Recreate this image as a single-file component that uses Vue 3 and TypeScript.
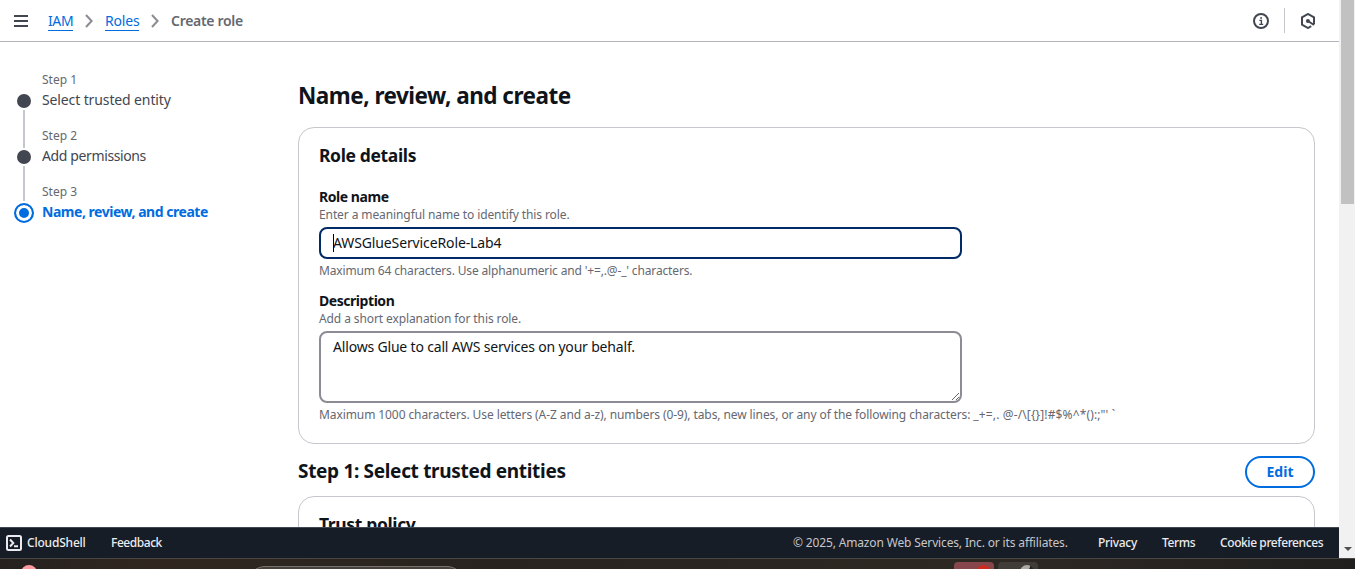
<script setup lang="ts">
import { ref } from 'vue'

interface Step {
  label: string
  title: string
  kind: string
}

const steps: Step[] = [
  { label: 'Step 1', title: 'Select trusted entity', kind: 'first' },
  { label: 'Step 2', title: 'Add permissions', kind: 'second' },
  { label: 'Step 3', title: 'Name, review, and create', kind: 'active' },
]

const roleName = ref('AWSGlueServiceRole-Lab4')
const description = ref('Allows Glue to call AWS services on your behalf.')
const allowed = '_+=,. @-/\\[{}]!#$%^*():;"\' `'
</script>

<template>
  <div class="screen">
    <div class="viewport">
      <div class="page">
        <header class="topbar">
          <svg class="burger" width="14" height="12" viewBox="0 0 14 12">
            <path d="M0 1h14M0 6h14M0 11h14" />
          </svg>
          <nav class="crumbs">
            <a class="crumb iam">IAM</a>
            <svg class="chevron" width="8" height="14" viewBox="0 0 8 14"><path d="M1 1l5.6 6L1 13" /></svg>
            <a class="crumb roles">Roles</a>
            <svg class="chevron" width="8" height="14" viewBox="0 0 8 14"><path d="M1 1l5.6 6L1 13" /></svg>
            <span class="current">Create role</span>
          </nav>
          <div class="tools">
            <svg width="16" height="16" viewBox="0 0 16 16">
              <circle class="line" cx="8" cy="8" r="7" />
              <path class="line thin" d="M6.4 7.4h2V11.6M6.2 11.4h4" />
              <path class="line thin" d="M7.2 5h1.8" />
            </svg>
            <i class="divider"></i>
            <svg width="16" height="16" viewBox="0 0 16 16">
              <path class="line" d="M11.2 13.2L8 15 2 11.6V4.4L8 1l6 3.4v6.8" />
              <circle class="fill" cx="7.9" cy="7.9" r="2" />
              <path class="line" d="M8 8l6 4" />
            </svg>
          </div>
        </header>

        <div class="body">
          <aside class="steps">
            <div v-for="s in steps" :key="s.label" class="step" :class="s.kind">
              <div class="rail">
                <i class="dot"></i>
                <i class="link"></i>
              </div>
              <div class="step-text">
                <div class="step-label">{{ s.label }}</div>
                <div class="step-title">{{ s.title }}</div>
              </div>
            </div>
          </aside>

          <main class="main">
            <h1>Name, review, and create</h1>
            <section class="card details">
              <h3>Role details</h3>
              <label class="field-label">Role name</label>
              <p class="hint enter">Enter a meaningful name to identify this role.</p>
              <div class="input-wrap">
                <input v-model="roleName" class="input" type="text" spellcheck="false" />
                <i class="caret"></i>
              </div>
              <p class="note max64">Maximum 64 characters. Use alphanumeric and '+=,.@-_' characters.</p>
              <label class="field-label">Description</label>
              <p class="hint">Add a short explanation for this role.</p>
              <textarea v-model="description" class="area" spellcheck="false"></textarea>
              <p class="note">Maximum 1000 characters. Use letters (A-Z and a-z), numbers (0-9), tabs, new lines, or any of the following characters: <span class="allowed">{{ allowed }}</span></p>
            </section>
            <div class="section-head">
              <h2>Step 1: Select trusted entities</h2>
              <button class="edit" type="button">Edit</button>
            </div>
            <section class="card trust">
              <h3>Trust policy</h3>
            </section>
          </main>
        </div>

        <footer class="footer">
          <svg class="shell" width="16" height="16" viewBox="0 0 16 16">
            <rect x="1" y="1" width="14" height="14" rx="1.5" />
            <path d="M4 4.5L7.3 8 4 11.5M8 11.3h4" />
          </svg>
          <span class="cloudshell">CloudShell</span>
          <span class="feedback">Feedback</span>
          <span class="copyright">© 2025, Amazon Web Services, Inc. or its affiliates.</span>
          <span class="privacy">Privacy</span>
          <span class="terms">Terms</span>
          <span class="cookie">Cookie preferences</span>
        </footer>
      </div>
      <div class="scrollbar">
        <i class="thumb"></i>
        <i class="arrow"></i>
      </div>
    </div>
    <div class="taskbar">
      <i class="blob"></i>
      <i class="search"></i>
      <i class="app red"><b></b></i>
      <i class="app grey"><b></b></i>
    </div>
  </div>
</template>

<style>
html,
body {
  overflow: hidden;
}
</style>

<style scoped>
* {
  box-sizing: border-box;
}
.screen {
  width: 1355px;
  height: 569px;
  display: flex;
  flex-direction: column;
  overflow: hidden;
  background: #fff;
  color: #0f141a;
  font-family: 'Noto Sans', 'Open Sans', sans-serif;
  font-size: 14px;
  line-height: 20px;
}
.viewport {
  display: flex;
  height: 558px;
}
.page {
  width: 1339px;
  display: flex;
  flex-direction: column;
}
.topbar {
  height: 42px;
  flex: none;
  display: flex;
  align-items: center;
  padding: 0 23px 0 14px;
  border-bottom: 1px solid #b4b4bb;
}
.burger {
  margin-right: 20px;
  fill: none;
  stroke: #424650;
  stroke-width: 2;
}
.crumbs {
  display: flex;
  align-items: center;
}
.crumb {
  height: 20px;
  color: #006ce0;
  border-bottom: 1px solid #006ce0;
  line-height: 20px;
}
.iam {
  width: 25px;
  letter-spacing: -0.4px;
}
.roles {
  width: 34px;
  letter-spacing: -0.2px;
}
.chevron {
  margin: 0 12px;
  fill: none;
  stroke: #8c8c94;
  stroke-width: 2;
}
.current {
  color: #656871;
  font-weight: 600;
  letter-spacing: -0.3px;
}
.tools {
  margin-left: auto;
  display: flex;
  align-items: center;
}
.line {
  fill: none;
  stroke: #424650;
  stroke-width: 2;
}
.thin {
  stroke-width: 1.4;
}
.fill {
  fill: #424650;
}
.divider {
  width: 1px;
  height: 25px;
  margin: 0 15px;
  background: #c6c6cd;
}
.body {
  height: 485px;
  display: flex;
  overflow: hidden;
}
.steps {
  width: 298px;
  flex: none;
  padding: 28px 0 0 14px;
}
.step {
  height: 56px;
  display: flex;
  gap: 8px;
}
.rail {
  width: 20px;
  padding-top: 24px;
  display: flex;
  flex-direction: column;
  align-items: center;
}
.dot {
  width: 14px;
  height: 14px;
  border-radius: 50%;
  background: #424650;
  flex: none;
}
.link {
  width: 2px;
  height: 38px;
  margin-top: 2px;
  background: #c6c6cd;
  flex: none;
}
.second .link {
  height: 35px;
}
.active .rail {
  padding-top: 21px;
}
.active .dot {
  width: 20px;
  height: 20px;
  border: 2px solid #006ce0;
  background: #006ce0;
  box-shadow: inset 0 0 0 3px #fff;
}
.active .link {
  display: none;
}
.step-label {
  font-size: 12px;
  color: #656871;
}
.step-title {
  color: #424650;
  letter-spacing: -0.12px;
}
.second .step-title {
  letter-spacing: -0.38px;
}
.active .step-title {
  color: #006ce0;
  font-weight: 700;
  letter-spacing: -0.47px;
}
.main {
  width: 1017px;
  padding-top: 39px;
}
h1,
h2,
h3,
p {
  margin: 0;
}
h1 {
  font-size: 22.5px;
  line-height: 30px;
  letter-spacing: -0.5px;
}
.card {
  border: 1px solid #c6c6cd;
  border-radius: 16px;
  padding: 16px 20px 0;
}
.details {
  height: 317px;
  margin-top: 16px;
}
h3 {
  font-size: 17.5px;
  line-height: 22px;
  letter-spacing: -0.36px;
}
.details h3 {
  margin-bottom: 21px;
}
.field-label {
  display: block;
  font-weight: 700;
  letter-spacing: -0.45px;
}
.hint {
  font-size: 12px;
  line-height: 16px;
  color: #656871;
  letter-spacing: -0.1px;
}
.note {
  font-size: 12px;
  line-height: 16px;
  margin-top: 4px;
  color: #656871;
  letter-spacing: -0.09px;
  white-space: nowrap;
}
.max64 {
  letter-spacing: -0.15px;
  margin-bottom: 12px;
}
.allowed {
  letter-spacing: 0.13px;
}
.input-wrap {
  position: relative;
  width: 643px;
  height: 32px;
  margin-top: 4px;
}
.input,
.area {
  display: block;
  width: 643px;
  margin: 0;
  font: inherit;
  color: #0f141a;
  background: #fff;
  outline: none;
  border-radius: 8px;
}
.input {
  height: 32px;
  padding: 3px 12px 5px;
  border: 2px solid #002b66;
  letter-spacing: -0.12px;
}
.caret {
  position: absolute;
  left: 14px;
  top: 7px;
  width: 1px;
  height: 18px;
  background: #000;
}
.area {
  height: 72px;
  margin-top: 4px;
  padding: 4px 12px;
  border: 2px solid #8c8c94;
  letter-spacing: -0.18px;
  resize: both;
}
.section-head {
  height: 52px;
  display: flex;
  align-items: center;
  justify-content: space-between;
  padding-top: 4px;
}
h2 {
  margin-bottom: 2px;
  font-size: 19px;
  line-height: 24px;
  letter-spacing: -0.32px;
}
.edit {
  width: 70px;
  height: 32px;
  padding: 0;
  border: 2px solid #006ce0;
  border-radius: 20px;
  background: #fff;
  color: #006ce0;
  font: inherit;
  font-weight: 700;
}
.trust {
  height: 80px;
}
.footer {
  height: 31px;
  flex: none;
  display: flex;
  align-items: center;
  padding: 0 0 0 6px;
  border-top: 1px solid #424650;
  background: #161d26;
  color: #ebebf0;
  font-size: 12px;
  font-weight: 500;
  white-space: nowrap;
}
.shell {
  margin-right: 5px;
  fill: none;
  stroke: #ebebf0;
  stroke-width: 2;
}
.cloudshell {
  width: 84px;
  letter-spacing: -0.2px;
}
.feedback {
  letter-spacing: -0.45px;
}
.copyright {
  width: 305px;
  margin-left: auto;
  color: #c6c6cd;
  font-weight: 400;
  letter-spacing: -0.15px;
}
.privacy {
  width: 64px;
  letter-spacing: -0.3px;
}
.terms {
  width: 58px;
  letter-spacing: -0.4px;
}
.cookie {
  width: 119px;
  letter-spacing: -0.41px;
}
.scrollbar {
  width: 16px;
  position: relative;
  background: #f1f1f1;
}
.thumb {
  display: block;
  width: 13px;
  height: 204px;
  margin-left: 2px;
  background: #c1c1c1;
}
.arrow {
  position: absolute;
  left: 5px;
  bottom: 7px;
  border: 4px solid transparent;
  border-top-color: #505050;
  border-bottom: 0;
}
.taskbar {
  position: relative;
  height: 11px;
  overflow: hidden;
  border-top: 1px solid #4a4643;
  background: linear-gradient(90deg, #25211f 0, #30261f 150px, #28231f 500px, #2e2823 1000px, #201f1e 1355px);
}
.blob,
.search,
.app,
.app b {
  position: absolute;
}
.blob {
  left: 21px;
  top: 6px;
  width: 16px;
  height: 16px;
  border-radius: 50%;
  background: #ff9a9e;
}
.search {
  left: 248px;
  top: 7px;
  width: 216px;
  height: 34px;
  border: 1px solid #77716d;
  border-radius: 17px;
  background: #45403c;
}
.app {
  top: 3px;
  width: 40px;
  height: 30px;
  border-radius: 4px;
  overflow: hidden;
}
.red {
  left: 954px;
  background: #87464b;
}
.red b {
  left: 22px;
  top: 3px;
  width: 15px;
  height: 15px;
  border-radius: 50%;
  background: #cc2a20;
}
.grey {
  left: 998px;
  background: #403c38;
}
.grey b {
  left: 22px;
  top: 3px;
  width: 14px;
  height: 14px;
  border-radius: 50%;
  background: linear-gradient(100deg, #aaa9a3 60%, #262524 62%);
}
</style>
